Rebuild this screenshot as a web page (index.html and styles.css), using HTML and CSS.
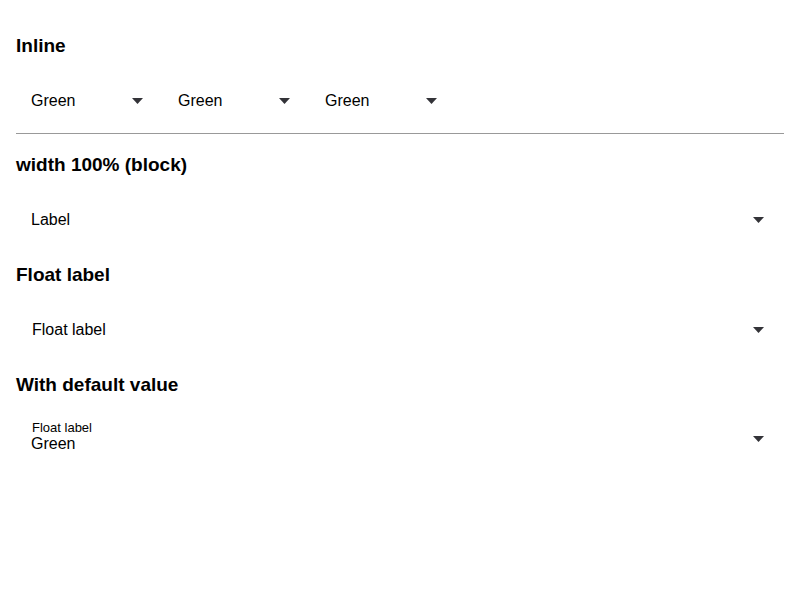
FILE: index.html
```html
<!DOCTYPE html>
<html>
<head>
<meta charset="utf-8">
<link rel="stylesheet" href="styles.css">
</head>
<body>
<div class="page">
  <h2 class="title">Inline</h2>
  <div class="row">
    <div class="select inline"><span class="value">Green</span><svg class="arrow" width="11" height="6" viewBox="0 0 11 6"><polygon points="0,0 11,0 5.5,6" /></svg></div>
    <div class="select inline"><span class="value">Green</span><svg class="arrow" width="11" height="6" viewBox="0 0 11 6"><polygon points="0,0 11,0 5.5,6" /></svg></div>
    <div class="select inline"><span class="value">Green</span><svg class="arrow" width="11" height="6" viewBox="0 0 11 6"><polygon points="0,0 11,0 5.5,6" /></svg></div>
  </div>
  <hr class="divider">
  <h2 class="title">width 100% (block)</h2>
  <div class="select block"><span class="value">Label</span><svg class="arrow" width="11" height="6" viewBox="0 0 11 6"><polygon points="0,0 11,0 5.5,6" /></svg></div>
  <h2 class="title">Float label</h2>
  <div class="select block"><span class="value float">Float label</span><svg class="arrow" width="11" height="6" viewBox="0 0 11 6"><polygon points="0,0 11,0 5.5,6" /></svg></div>
  <h2 class="title">With default value</h2>
  <div class="select block"><div class="stack"><span class="small-label">Float label</span><span class="value">Green</span></div><svg class="arrow" width="11" height="6" viewBox="0 0 11 6"><polygon points="0,0 11,0 5.5,6" /></svg></div>
</div>
</body>
</html>
```
FILE: styles.css
```css
* { box-sizing: border-box; }
html, body { margin: 0; padding: 0; background: #fff; }
body {
  font-family: "Liberation Sans", Arial, sans-serif;
  color: #000;
}
.page {
  padding: 35px 16px 0 16px;
}
.title {
  margin: 0 0 16px 0;
  font-size: 19px;
  line-height: 22px;
  font-weight: bold;
}
.row {
  display: flex;
}
.select {
  display: flex;
  align-items: center;
  justify-content: space-between;
  height: 56px;
  padding: 0 20px 0 15px;
  margin-bottom: 16px;
}
.row .select { margin-bottom: 0; }
.select.inline { width: 147px; }
.select.block { width: 100%; }
.value {
  font-size: 16px;
  line-height: 18px;
}
.value.float { padding-left: 1px; }
.arrow { fill: #333338; display: block; }
.select.block:last-child .arrow { margin-top: -2px; }
.stack {
  display: flex;
  flex-direction: column;
  padding-bottom: 7px;
}
.small-label {
  font-size: 13px;
  line-height: 15px;
  padding-left: 1px;
}
.divider {
  border: 0;
  border-top: 1px solid #999;
  margin: 4px 0 20px 0;
  height: 0;
}
```
